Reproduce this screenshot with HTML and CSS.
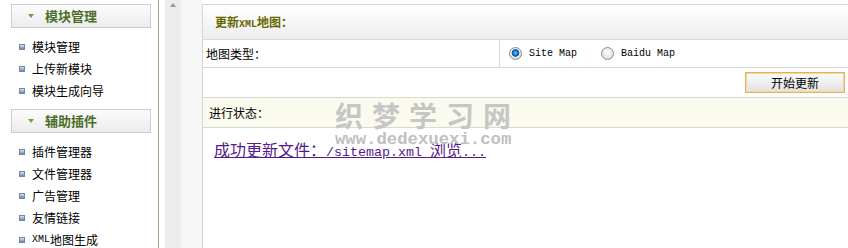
FILE: index.html
```html
<!DOCTYPE html>
<html>
<head>
<meta charset="utf-8">
<title>更新XML地图</title>
<link rel="stylesheet" href="styles.css">
</head>
<body>
<div class="page">
  <aside class="side">
    <div class="grp-head"><span class="arrow"></span>模块管理</div>
    <ul class="menu">
      <li><span class="dot"></span>模块管理</li>
      <li><span class="dot"></span>上传新模块</li>
      <li><span class="dot"></span>模块生成向导</li>
    </ul>
    <div class="grp-head"><span class="arrow"></span>辅助插件</div>
    <ul class="menu">
      <li><span class="dot"></span>插件管理器</li>
      <li><span class="dot"></span>文件管理器</li>
      <li><span class="dot"></span>广告管理</li>
      <li><span class="dot"></span>友情链接</li>
      <li><span class="dot"></span><span class="mono-s">XML</span>地图生成</li>
    </ul>
  </aside>
  <div class="gap"></div>
  <div class="toggle"><span class="up"></span></div>
  <div class="pad"></div>
  <main class="panel">
    <div class="p-head">更新<span class="mono-b">XML</span>地图：</div>
    <div class="row row-type">
      <div class="lbl">地图类型：</div>
      <div class="opts">
        <label class="opt"><input class="radio" type="radio" name="maptype" checked><span class="mono">Site Map</span></label>
        <label class="opt"><input class="radio" type="radio" name="maptype"><span class="mono">Baidu Map</span></label>
      </div>
    </div>
    <div class="row row-btn"><button class="btn" type="button">开始更新</button></div>
    <div class="row row-status">进行状态：</div>
    <div class="result"><a href="#" class="link">成功更新文件：<span class="mono-l">/sitemap.xml </span>浏览<span class="mono-l">...</span></a></div>
  </main>
</div>
<div class="wm">
  <div class="wm-cn">织梦学习网</div>
  <div class="wm-url">www.dedexuexi.com</div>
</div>
</body>
</html>
```

FILE: styles.css
```css
* { box-sizing: border-box; }
html, body { margin: 0; padding: 0; background: #fff; }
body {
  font-family: "Noto Sans CJK SC", "Liberation Sans", sans-serif;
  font-size: 12px;
  color: #000;
  width: 848px;
  height: 248px;
  overflow: hidden;
  position: relative;
}
.page {
  display: flex;
  height: 248px;
}
.side {
  flex: none;
  width: 159px;
  border-right: 1px solid #a2a38a;
  padding-top: 4px;
}
.grp-head {
  margin-left: 11px;
  width: 140px;
  height: 24px;
  border: 1px solid #cdcdcd;
  background: linear-gradient(#fcfcfc, #ececec);
  display: flex;
  align-items: center;
  font-size: 13px;
  font-weight: bold;
  color: #4b6e26;
  line-height: 22px;
}
.arrow {
  width: 0;
  height: 0;
  margin-left: 16px;
  margin-right: 11px;
  border-left: 3.5px solid transparent;
  border-right: 3.5px solid transparent;
  border-top: 4px solid #6aa050;
}
.menu {
  list-style: none;
  margin: 8px 0 7px;
  padding: 0;
}
.menu li {
  height: 22px;
  line-height: 22px;
  padding-left: 19px;
  display: flex;
  align-items: center;
}
.dot {
  width: 6px;
  height: 6px;
  margin-right: 7px;
  border: 1px solid #7b8799;
  background: linear-gradient(#d6e4f7, #5c88c9);
}
.mono-s { font-family: "Liberation Mono", monospace; font-size: 10px; }
.mono-b { font-family: "Liberation Mono", monospace; font-size: 10px; font-weight: bold; }
.gap { flex: none; width: 6px; }
.toggle {
  flex: none;
  width: 16px;
  background: #ececec;
  display: flex;
  justify-content: center;
  padding-top: 3px;
}
.up {
  width: 0;
  height: 0;
  border-left: 3.5px solid transparent;
  border-right: 3.5px solid transparent;
  border-bottom: 4px solid #9a9a9a;
}
.pad { flex: none; width: 21px; background: #f6f6f6; }
.panel {
  flex: 1;
  margin-top: 4px;
  border-left: 1px solid #d5d5d5;
  border-top: 1px solid #d5d5d5;
  display: flex;
  flex-direction: column;
}
.p-head {
  height: 35px;
  line-height: 34px;
  border-bottom: 1px solid #d8d8d8;
  background: linear-gradient(#ffffff, #ededed);
  padding-left: 12px;
  font-weight: bold;
  color: #666600;
}
.row {
  border-bottom: 1px solid #d8d8d8;
  display: flex;
}
.row-type { height: 28px; }
.lbl {
  width: 297px;
  border-right: 1px solid #d8d8d8;
  padding-left: 3px;
  line-height: 27px;
}
.opts {
  display: flex;
  align-items: center;
  padding-left: 9px;
  gap: 24px;
}
.opt { display: flex; align-items: center; }
.radio {
  appearance: none;
  -webkit-appearance: none;
  margin: 0 7px 0 0;
  width: 13px;
  height: 13px;
  border-radius: 50%;
  border: 1px solid #8c8c8c;
  background: radial-gradient(circle at 50% 40%, #ffffff, #d4d4d4);
}
.radio:checked {
  background: radial-gradient(circle at 50% 45%, #63c4ff 0, #1a84d6 2px, #0d4f93 3.4px, #f4f4f4 4.2px, #d0d0d0 6px);
}
.mono { font-family: "Liberation Mono", monospace; font-size: 10px; }
.row-btn {
  height: 30px;
  justify-content: flex-end;
  align-items: center;
  padding-right: 3px;
}
.btn {
  width: 100px;
  height: 21px;
  padding: 0;
  border: 1px solid #e4b05a;
  box-shadow: inset 0 0 0 1px #f6d9a2;
  background: linear-gradient(#fdfdfd, #e0e0e0);
  font-family: "Noto Sans CJK SC", sans-serif;
  font-size: 12px;
  line-height: 18px;
  color: #000;
}
.row-status {
  height: 30px;
  line-height: 29px;
  padding-left: 6px;
  background: #fafbee;
}
.result {
  padding: 11px 11px;
  line-height: 20px;
}
.link {
  font-size: 16px;
  color: #551a8b;
  text-decoration: underline;
}
.mono-l { font-family: "Liberation Mono", monospace; font-size: 13.33px; }
.wm {
  position: absolute;
  left: 335px;
  top: 99px;
  pointer-events: none;
}
.wm-cn {
  font-family: "Noto Sans CJK SC", sans-serif;
  font-weight: bold;
  font-size: 28px;
  line-height: 32px;
  letter-spacing: 9px;
  color: #c6c6c6;
  white-space: nowrap;
}
.wm-url {
  font-family: "Liberation Mono", monospace;
  font-weight: bold;
  font-size: 17.3px;
  line-height: 18px;
  color: #c0c0c0;
  white-space: nowrap;
  margin-top: 0;
}
```
